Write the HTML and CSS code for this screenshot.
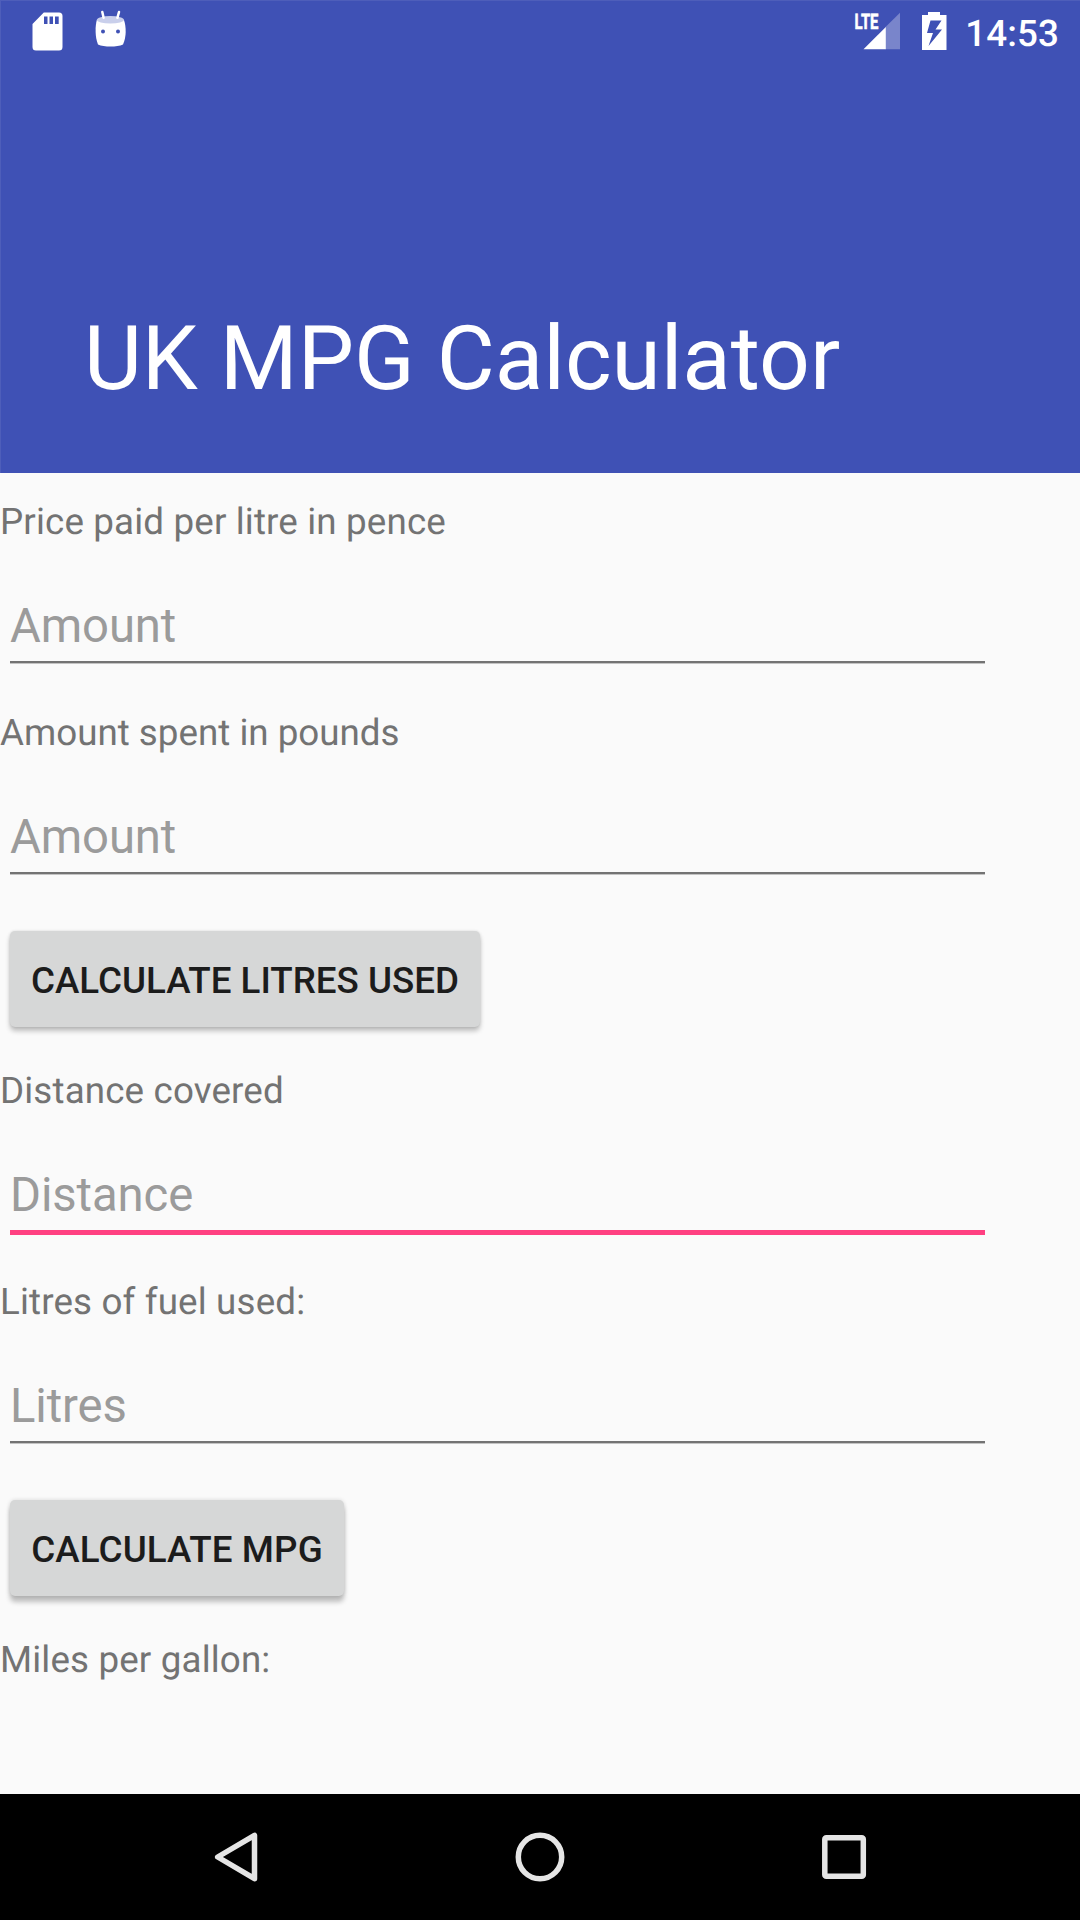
FILE: index.html
```html
<!DOCTYPE html>
<html lang="en">
<head>
<meta charset="utf-8">
<title>UK MPG Calculator</title>
<link rel="stylesheet" href="styles.css">
</head>
<body>
<header class="app-bar">
  <div class="status">
    <svg class="status-left" width="110" height="63" viewBox="0 0 110 63">
      <path fill="#fff" fill-rule="evenodd" d="M11.800 12.500H27.000a3.500 3.500 0 0 1 3.500 3.500V47a3.500 3.500 0 0 1-3.500 3.500H4A3.500 3.500 0 0 1 .5 47V24zM12 16.500v7.500h3.500v-7.500zM17.500 16.500v7.500h3.500v-7.500zM23 16.500v7.500h3.700v-7.500z"/>
      <path fill="#fff" d="M64.800 20C63 27 63 37 66 44.500C72 47.300 85 47.300 91 44.500C94.500 37 94.300 27 92 20z"/>
      <ellipse cx="78.400" cy="19.800" rx="13.600" ry="3.700" fill="#c9cfeb"/>
      <path d="M70.300 12l1.300 5.800M87 12l-1.600 5.800" stroke="#fff" stroke-width="2.500" stroke-linecap="round"/>
      <circle cx="71" cy="31.500" r="2" fill="#3f51b5"/>
      <circle cx="86" cy="31.500" r="2" fill="#3f51b5"/>
    </svg>
    <div class="status-right">
      <svg width="98" height="63" viewBox="0 0 98 63">
        <path fill="#7985cb" d="M51 12.700V49.300H36.500V27z"/>
        <path fill="#fff" d="M36.800 27V49.300H14.500z"/>
        <text class="lte" x="5.500" y="29" textLength="24" lengthAdjust="spacingAndGlyphs">LTE</text>
        <path fill="#fff" fill-rule="evenodd" d="M79 12H91V15H97.500V50H73V15H79zM81.500 20.500L78 33H84L79.500 46L93 29.500H86.500L92.500 20.500z"/>
      </svg>
      <span class="time">14:53</span>
    </div>
  </div>
  <h1 class="title">UK MPG Calculator</h1>
</header>
<main class="form">
  <label class="label wide" for="price">Price paid per litre in pence</label>
  <input class="field" id="price" placeholder="Amount">
  <label class="label" for="spent">Amount spent in pounds</label>
  <input class="field" id="spent" placeholder="Amount">
  <button class="button calc-litres">CALCULATE LITRES USED</button>
  <label class="label wide" for="distance">Distance covered</label>
  <input class="field active" id="distance" placeholder="Distance">
  <label class="label wide" for="litres">Litres of fuel used:</label>
  <input class="field" id="litres" placeholder="Litres">
  <button class="button calc-mpg">CALCULATE MPG</button>
  <div class="label wide">Miles per gallon:</div>
</main>
<nav class="nav">
  <svg width="60" height="60" viewBox="0 0 60 60"><path d="M48.500 8.300V51.700L11.700 30z"/></svg>
  <svg width="60" height="60" viewBox="0 0 60 60"><circle cx="30" cy="30" r="21.700"/></svg>
  <svg width="60" height="60" viewBox="0 0 60 60"><rect x="10.800" y="10.800" width="38.500" height="38.500" rx="1.500"/></svg>
</nav>
</body>
</html>
```
FILE: styles.css
```css
* { box-sizing: border-box; }
body {
  margin: 0;
  width: 1080px;
  height: 1920px;
  display: flex;
  flex-direction: column;
  background: #fafafa;
  font-family: Roboto, "Liberation Sans", sans-serif;
  text-rendering: geometricPrecision;
  overflow: hidden;
}
svg { display: block; }
.app-bar {
  height: 473px;
  background: #3f51b5;
  color: #fff;
  box-shadow: inset 1px 1px 0 rgba(255, 255, 255, 0.08);
}
.status {
  display: flex;
  justify-content: space-between;
  height: 63px;
  padding: 0 21px 0 32px;
}
.status-right { display: flex; gap: 18px; }
.lte { font-size: 21.5px; font-weight: 700; fill: #fff; stroke: #fff; stroke-width: 0.6px; }
.time { font-size: 36.75px; font-weight: 500; line-height: 67px; letter-spacing: 0.1px; }
.title {
  margin: 0;
  padding: 243px 0 0 84px;
  font-size: 89.25px;
  font-weight: 400;
  line-height: 105px;
  letter-spacing: -0.06px;
}
.form {
  height: 1321px;
  padding-top: 24px;
  display: flex;
  flex-direction: column;
  align-items: flex-start;
}
.label {
  height: 49px;
  font-size: 36.75px;
  line-height: 49px;
  color: #737373;
}
.wide { letter-spacing: 0.15px; }
.field {
  width: 975px;
  height: 65px;
  margin: 52px 0 45px 10px;
  padding: 0 0 7px;
  border: 0;
  border-bottom: 2px solid #737373;
  border-radius: 0;
  outline: 0;
  background: none;
  box-shadow: 0 1px 0 rgba(0, 0, 0, 0.22);
  font: 47.25px/56px Roboto, "Liberation Sans", sans-serif;
  letter-spacing: -0.1px;
}
.field::placeholder { color: #9b9b9b; opacity: 1; }
.active {
  height: 68px;
  margin-bottom: 42px;
  padding-bottom: 7px;
  border-bottom: 5px solid #ff4081;
  box-shadow: none;
}
.button {
  height: 96px;
  margin: 12px 0 39px 10px;
  padding: 2px 0 0;
  border: 0;
  border-radius: 5px;
  background: #d6d7d7;
  color: #1c1c1c;
  font: 500 36.75px/43px Roboto, "Liberation Sans", sans-serif;
  box-shadow: 0 4px 5px rgba(0, 0, 0, 0.24), 0 0 3px rgba(0, 0, 0, 0.12);
}
.calc-litres { width: 470px; }
.calc-mpg {
  width: 334px;
  letter-spacing: 0.1px;
  box-shadow: 0 6px 5px rgba(0, 0, 0, 0.24), 0 0 4px rgba(0, 0, 0, 0.14);
}
.nav {
  flex: 1;
  display: flex;
  justify-content: space-between;
  align-items: center;
  padding: 0 206px;
  background: #000;
}
.nav svg { fill: none; stroke: #e5e5e5; stroke-width: 5.5; stroke-linejoin: round; }
```
